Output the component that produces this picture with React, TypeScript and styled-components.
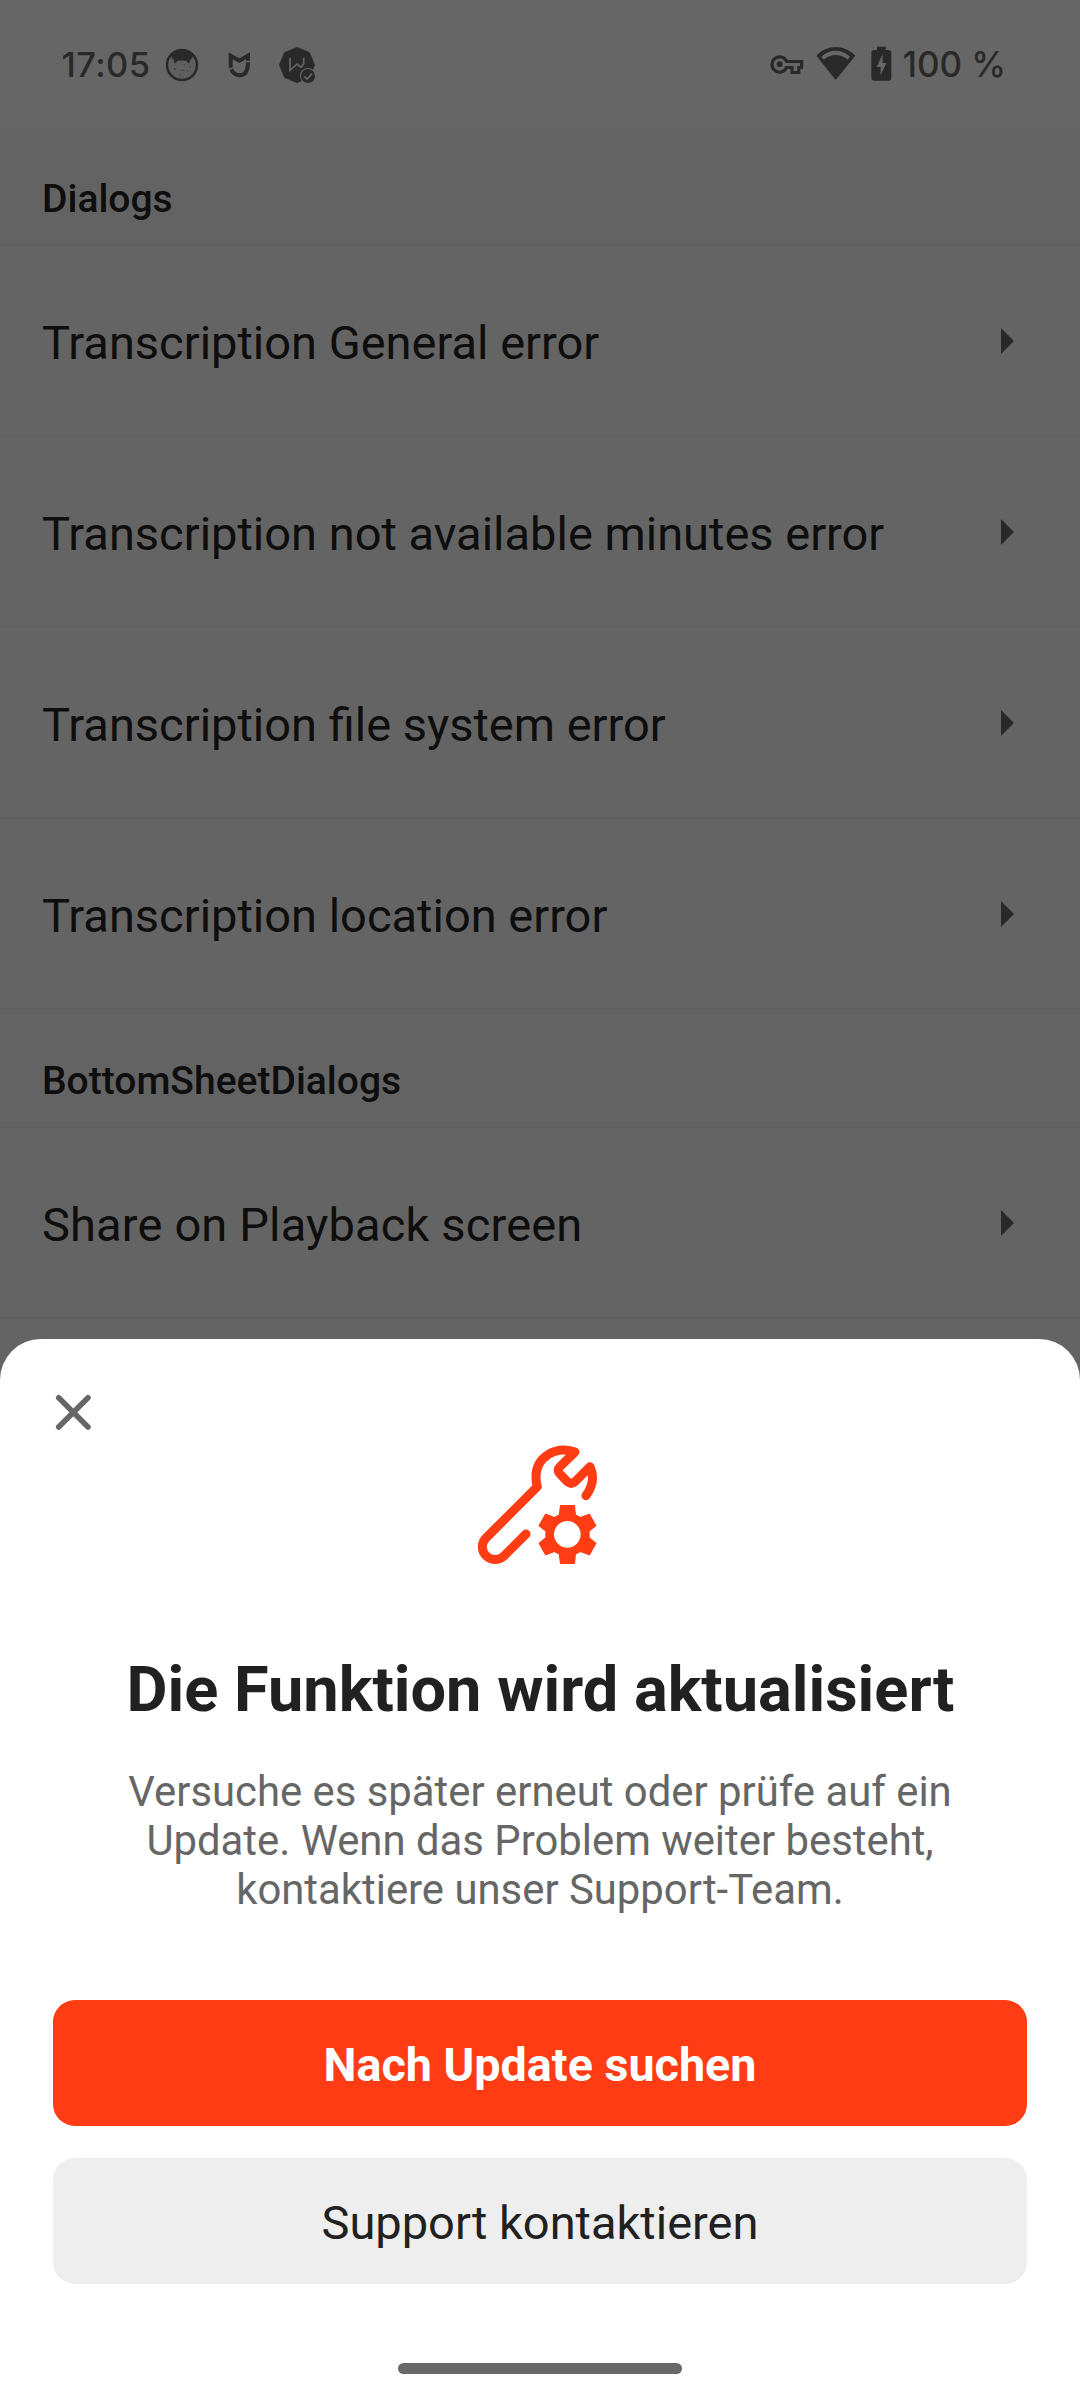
import React from 'react';
import styled, { createGlobalStyle } from 'styled-components';

const GlobalStyle = createGlobalStyle`
  *, *::before, *::after { box-sizing: border-box; }
  body { margin: 0; background: #fff; font-family: Roboto, "Noto Sans", sans-serif; }
`;

const INK = '#232323';
const ICON = '#686868';
const ACCENT = '#ff3c13';

const Screen = styled.div`
  position: relative;
  width: 1080px;
  height: 2400px;
  overflow: hidden;
  background: #fbfbfb;
`;

const StatusBar = styled.header`
  height: 128px;
  padding: 2px 67px 0 61.5px;
  display: flex;
  align-items: center;
  justify-content: space-between;
  background: #fff;
  color: ${ICON};
`;

const StatusGroup = styled.div<{ $lift?: number }>`
  display: flex;
  align-items: center;
  margin-top: ${({ $lift = 0 }) => -$lift}px;
`;

const StatusText = styled.span<{ $width: number; $size: number; $spacing: number }>`
  width: ${({ $width }) => $width}px;
  font: 500 ${({ $size }) => $size}px/42px Inter, Roboto, sans-serif;
  letter-spacing: ${({ $spacing }) => $spacing}px;
  white-space: nowrap;
`;

const StatusIcon = styled.svg<{ $gap: number; $drop?: number }>`
  display: block;
  flex: none;
  margin-right: ${({ $gap }) => $gap}px;
  margin-top: ${({ $drop = 0 }) => $drop}px;
`;

const List = styled.main`
  display: flex;
  flex-direction: column;
`;

const SectionTitle = styled.h2`
  margin: 0;
  height: 118px;
  padding: 48px 42px 0;
  border-bottom: 2px solid #eee;
  background: #f8f8f8;
  color: ${INK};
  font-size: 39px;
  font-weight: 500;
  line-height: 46px;
`;

const Row = styled.div`
  height: 191px;
  padding: 0 66px 0 42px;
  border-bottom: 2px solid #eee;
  background: #fbfbfb;
  display: flex;
  align-items: center;
  justify-content: space-between;
`;

const RowLabel = styled.span<{ $tracking: number }>`
  padding-top: 5px;
  color: ${INK};
  font-size: 47px;
  line-height: 56px;
  letter-spacing: ${({ $tracking }) => ($tracking ? `${$tracking}px` : 'normal')};
`;

const Arrow = styled.svg`
  display: block;
  width: 13px;
  height: 26px;
`;

const Scrim = styled.div`
  position: absolute;
  inset: 0;
  background: rgba(0, 0, 0, 0.6);
  display: flex;
  flex-direction: column;
  justify-content: flex-end;
`;

const Sheet = styled.section`
  height: 1061px;
  padding: 46px 53px 26px;
  border-radius: 41px 41px 0 0;
  background: #fff;
  display: flex;
  flex-direction: column;
  align-items: center;
`;

const CloseButton = styled.button`
  align-self: flex-start;
  width: 54px;
  height: 54px;
  margin-left: -7px;
  padding: 0;
  border: 0;
  background: none;
`;

const Illustration = styled.svg`
  display: block;
  flex: none;
  width: 180px;
  height: 134px;
  margin-top: 1px;
`;

const Title = styled.h1`
  margin: 78px 0 0;
  padding-left: 1px;
  color: #212121;
  font-size: 63.1px;
  font-weight: 700;
  line-height: 74px;
  white-space: nowrap;
`;

const Message = styled.p`
  margin: 41px 0 0;
  width: 860px;
  color: #666;
  font-size: 41.85px;
  line-height: 49px;
  text-align: center;
`;

const Actions = styled.div`
  width: 100%;
  margin-top: 86px;
  display: flex;
  flex-direction: column;
  gap: 32px;
`;

const Action = styled.button<{ $primary?: boolean }>`
  height: 126px;
  padding: 3px 0 0;
  border: 0;
  border-radius: 22px;
  background: ${({ $primary }) => ($primary ? ACCENT : '#eee')};
  color: ${({ $primary }) => ($primary ? '#fff' : '#212121')};
  font: ${({ $primary }) => ($primary ? '700 46.7px' : '400 47px')}/56px Roboto, sans-serif;
`;

const HomeHandle = styled.div`
  width: 284px;
  height: 11px;
  margin-top: auto;
  border-radius: 5.5px;
  background: #686868;
`;

const CatIcon = () => (
  <StatusIcon $gap={28.5} width="34" height="34" viewBox="375.5 54 102 102">
    <circle cx="426.5" cy="105" r="46" fill="#fff" />
    <circle cx="426.5" cy="105" r="42" fill={ICON} fillOpacity="0.12" />
    <circle cx="426.5" cy="105" r="45" fill="none" stroke={ICON} strokeWidth="7.500" />
    <path
      d="M393 74C410 56 443 56 460 74C458 83 455 87 451 90L449 101L439 93Q426 90 413 93L404 101L402 90C398 87 395 83 393 74Z"
      fill={ICON}
    />
    <g fill={ICON}>
      <circle cx="405" cy="117" r="2.5" />
      <circle cx="428" cy="121" r="2" />
      <circle cx="444" cy="122" r="1.5" />
      <circle cx="433" cy="104" r="1.500" />
      <circle cx="451" cy="110" r="1.500" />
      <circle cx="421" cy="134" r="1.500" />
    </g>
  </StatusIcon>
);

const MiIcon = () => (
  <StatusIcon $gap={26} width="25" height="28" viewBox="563 62 75 84">
    <g fill="none" stroke={ICON} strokeWidth="12">
      <path d="M574 112V76L600 91L626 76V91" />
      <path d="M576 117C581 130 590 135 601 135C617 135 626 125 626 96" />
    </g>
  </StatusIcon>
);

const BadgeIcon = () => (
  <StatusIcon $gap={0} width="38" height="38" viewBox="717 48 114 114">
    <path
      d="M774 52L811.500 67.500L827 105L811.500 142.500L774 158L736.500 142.500L721 105L736.500 67.500Z"
      fill={ICON}
      stroke={ICON}
      strokeWidth="2"
      strokeLinejoin="round"
    />
    <path d="M753 83V121L774 102L786 112L794 102V83" fill="none" stroke="#fff" strokeWidth="5" />
    <circle cx="807" cy="138" r="24" fill="#fff" />
    <circle cx="807" cy="138" r="21" fill={ICON} />
    <path d="M796 139L804 147L819 131" fill="none" stroke="#fff" strokeWidth="5" />
  </StatusIcon>
);

const KeyIcon = () => (
  <StatusIcon $gap={12} $drop={3} width="34" height="21.300" viewBox="59 72 102 64">
    <path
      d="M109 94.500H154V112.500H145.500V127.500H125V112.500H109A23 23 0 1 1 109 94.500Z"
      fill="none"
      stroke={ICON}
      strokeWidth="9.500"
    />
    <circle cx="88" cy="103" r="9" fill={ICON} />
  </StatusIcon>
);

const WifiIcon = () => (
  <StatusIcon $gap={15} width="40" height="34.700" viewBox="197 48 120 104">
    <path
      fill={ICON}
      fillRule="evenodd"
      d="M198 77C232 42.500 280 42.500 315 77L256 150ZM213 80C238 56.500 274 56.500 299 80L292 88.500C270 70.500 242 70.500 220 88.500Z"
    />
  </StatusIcon>
);

const BatteryIcon = () => (
  <StatusIcon $gap={11} width="20.700" height="35.300" viewBox="362 46 62 106">
    <rect x="363" y="58" width="60" height="92" rx="8" fill={ICON} />
    <rect x="380" y="48" width="26" height="14" fill={ICON} />
    <path d="M397 70L379 109H391V134L408 97H397Z" fill="#fff" />
  </StatusIcon>
);

const WrenchGear = () => (
  <Illustration viewBox="0 60 540 402" aria-hidden="true">
    <path
      d="M408 227Q440 182 420 140L376 184Q364 195 352 185L330 162Q319 151 330 140L375 96C314 76 258 114 258 170C258 184 259 192 262 200L108 354C93 369 93 393 109 408C124 422 147 422 162 408L228 342"
      fill="none"
      stroke={ACCENT}
      strokeWidth="27"
      strokeLinecap="round"
      strokeLinejoin="round"
    />
    <path
      fillRule="evenodd"
      fill={ACCENT}
      stroke={ACCENT}
      strokeWidth="4"
      strokeLinejoin="round"
      d="M332 257H373L376 285L391 293L418 283L437 317L417 333V353L437 370L418 404L391 394L376 402L373 430H332L328 402L313 394L287 404L268 370L288 353V333L268 317L287 283L313 293L328 285ZM352 301A42 42 0 1 0 352 385A42 42 0 1 0 352 301Z"
    />
  </Illustration>
);

const dialogs = [
  'Transcription General error',
  'Transcription not available minutes error',
  'Transcription file system error',
  'Transcription location error',
];

const ListRow = ({ label, tracking = 0 }: { label: string; tracking?: number }) => (
  <Row>
    <RowLabel $tracking={tracking}>{label}</RowLabel>
    <Arrow viewBox="0 0 13 26">
      <path d="M0 0L13 13L0 26Z" fill={ICON} />
    </Arrow>
  </Row>
);

export default function App() {
  return (
    <Screen>
      <GlobalStyle />
      <StatusBar>
        <StatusGroup>
          <StatusText $width={103} $size={34.5} $spacing={0.4}>17:05</StatusText>
          <CatIcon />
          <MiIcon />
          <BadgeIcon />
        </StatusGroup>
        <StatusGroup $lift={3}>
          <KeyIcon />
          <WifiIcon />
          <BatteryIcon />
          <StatusText $width={110.5} $size={35} $spacing={-0.1}>100 %</StatusText>
        </StatusGroup>
      </StatusBar>
      <List>
        <SectionTitle>Dialogs</SectionTitle>
        {dialogs.map((label) => (
          <ListRow key={label} label={label} />
        ))}
        <SectionTitle>BottomSheetDialogs</SectionTitle>
        <ListRow label="Share on Playback screen" tracking={0.16} />
      </List>
      <Scrim>
        <Sheet>
          <CloseButton aria-label="Schließen">
            <svg width="54" height="54" viewBox="0 0 54 54">
              <path
                d="M12.700 12.700L42 42M42 12.700L12.700 42"
                stroke="#666"
                strokeWidth="5.500"
                strokeLinecap="round"
              />
            </svg>
          </CloseButton>
          <WrenchGear />
          <Title>Die Funktion wird aktualisiert</Title>
          <Message>
            Versuche es später erneut oder prüfe auf ein Update. Wenn das Problem weiter besteht,
            kontaktiere unser Support-Team.
          </Message>
          <Actions>
            <Action $primary>Nach Update suchen</Action>
            <Action>Support kontaktieren</Action>
          </Actions>
          <HomeHandle />
        </Sheet>
      </Scrim>
    </Screen>
  );
}
